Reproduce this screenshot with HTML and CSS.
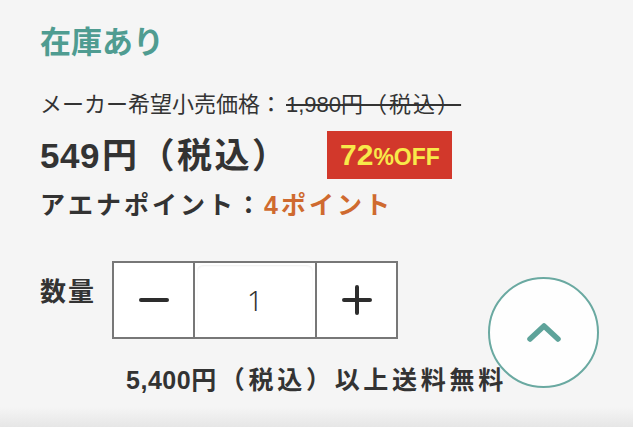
FILE: index.html
```html
<!DOCTYPE html>
<html lang="ja">
<head>
<meta charset="utf-8">
<link rel="stylesheet" href="styles.css">
</head>
<body>
<main class="page">
  <h2 class="stock">在庫あり</h2>
  <p class="msrp">メーカー希望小売価格：<s class="msrp-val">1,980<span class="wide">円（税込）</span></s></p>
  <div class="price-row">
    <span class="price">549<span class="wide">円（税込）</span></span>
    <span class="badge"><span class="badge-num">72</span><span class="badge-off">%OFF</span></span>
  </div>
  <p class="points">アエナポイント：<span class="points-val">4ポイント</span></p>
  <div class="qty-row">
    <span class="qty-label">数量</span>
    <div class="stepper">
      <button class="step-btn" type="button" aria-label="減らす">
        <svg width="30" height="30" viewBox="0 0 30 30"><path d="M2 15h26" stroke="#2d2d2d" stroke-width="4" stroke-linecap="round"/></svg>
      </button>
      <div class="step-input"><span class="step-value">1</span></div>
      <button class="step-btn" type="button" aria-label="増やす">
        <svg width="30" height="30" viewBox="0 0 30 30"><path d="M2 15h26M15 2v26" stroke="#2d2d2d" stroke-width="4" stroke-linecap="round"/></svg>
      </button>
    </div>
  </div>
  <p class="shipping">5,400<span class="wide">円（税込）以上送料無料</span></p>
</main>
<div class="bottom-shade"></div>
<button class="to-top" type="button" aria-label="ページトップへ">
  <svg width="34" height="20" viewBox="0 0 34 20"><path d="M3 17L17 4l14 13" fill="none" stroke="#5ea39a" stroke-width="5.5" stroke-linecap="round" stroke-linejoin="round"/></svg>
</button>
</body>
</html>
```
FILE: styles.css
```css
html, body {
  margin: 0;
  padding: 0;
  background: #f5f5f5;
  height: 100%;
  overflow: hidden;
}
body {
  font-family: "Liberation Sans", "Noto Sans CJK JP", sans-serif;
  color: #333;
}
.page {
  padding: 0 0 0 40px;
  display: flex;
  flex-direction: column;
  align-items: flex-start;
}
.stock {
  margin: 27px 0 0;
  font-size: 31px;
  line-height: 31px;
  font-weight: 700;
  color: #4f9c91;
}
.msrp {
  margin: 36px 0 0;
  font-size: 22px;
  line-height: 22px;
  font-weight: 400;
  color: #333;
}
.msrp .wide {
  letter-spacing: 2px;
}
.msrp-val {
  margin-left: 4px;
  text-decoration-thickness: 2px;
  text-decoration-color: #333;
}
.price-row {
  margin-top: 15px;
  display: flex;
  align-items: center;
  gap: 38px;
}
.price {
  font-size: 35px;
  line-height: 35px;
  font-weight: 700;
  letter-spacing: 0.5px;
  color: #333;
}
.price .wide {
  letter-spacing: 2.5px;
  margin-left: 2px;
}
.badge {
  display: flex;
  align-items: baseline;
  justify-content: center;
  width: 125px;
  height: 48px;
  box-sizing: border-box;
  padding-top: 9px;
  background: #d2382b;
  color: #f8e94a;
  font-family: "Liberation Sans", sans-serif;
  font-weight: 700;
}
.badge-num {
  font-size: 30px;
  line-height: 30px;
}
.badge-off {
  font-size: 23px;
  line-height: 23px;
}
.points {
  margin: 14px 0 0;
  font-size: 25px;
  line-height: 25px;
  font-weight: 700;
  letter-spacing: 3px;
  color: #333;
}
.points-val {
  color: #cf6a2f;
}
.qty-row {
  margin-top: 43px;
  display: flex;
  align-items: flex-start;
  gap: 16px;
}
.qty-label {
  margin-top: 18px;
  font-size: 26px;
  line-height: 26px;
  font-weight: 700;
  letter-spacing: 2px;
  color: #333;
}
.stepper {
  display: flex;
  height: 78px;
  border: 2px solid #777;
  box-sizing: border-box;
  background: #fff;
}
.step-btn {
  width: 79px;
  border: 0;
  padding: 0;
  background: #fff;
  display: flex;
  align-items: center;
  justify-content: center;
}
.step-input {
  width: 120px;
  border-left: 2px solid #777;
  border-right: 2px solid #777;
  display: flex;
  align-items: center;
  justify-content: center;
  background: #fff;
}
.step-value {
  display: flex;
  align-items: center;
  justify-content: center;
  width: 116px;
  height: 70px;
  border-radius: 6px;
  box-shadow: inset 0 1px 2px rgba(0,0,0,0.07);
  font-family: "Noto Sans", sans-serif;
  font-weight: 300;
  font-size: 28px;
  color: #333;
}
.shipping {
  align-self: stretch;
  margin: 29px 0 0 -40px;
  text-align: center;
  font-size: 25px;
  line-height: 25px;
  font-weight: 700;
  letter-spacing: 0.5px;
  color: #333;
}
.shipping .wide {
  letter-spacing: 3.7px;
}
.bottom-shade {
  position: fixed;
  left: 0;
  right: 0;
  bottom: 0;
  height: 20px;
  background: linear-gradient(#f5f5f5, #e6e6e6);
}
.to-top {
  position: fixed;
  left: 488px;
  top: 277px;
  width: 111px;
  height: 111px;
  border-radius: 50%;
  border: 2px solid #6aa9a1;
  background: rgba(255,255,255,0.88);
  padding: 0;
  display: flex;
  align-items: center;
  justify-content: center;
}
.to-top svg {
  margin-top: -2px;
}
```
